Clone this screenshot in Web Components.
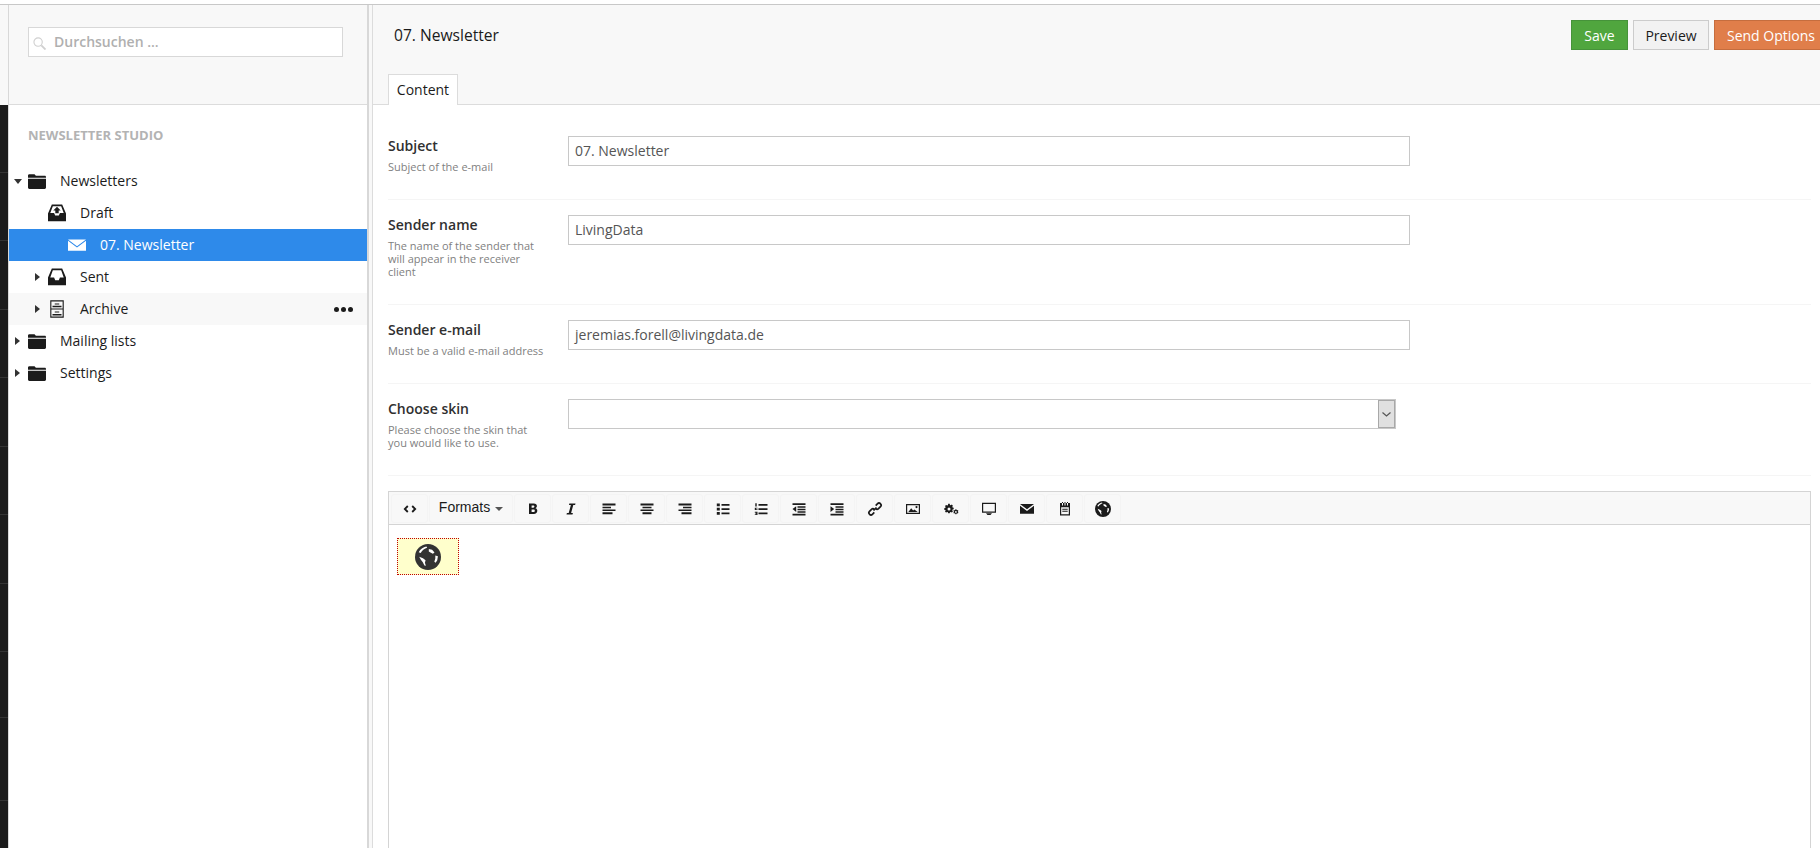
<!doctype html>
<html>
<head>
<meta charset="utf-8">
<style>
  html, body { margin: 0; height: 100%; overflow: hidden; background: #fff; }
  body { font-family: "Open Sans", sans-serif; font-size: 14px; color: #1b1b1b; }
</style>
</head>
<body>
<app-shell>
  <side-rail slot="rail"></side-rail>
  <tree-panel slot="tree"></tree-panel>
  <editor-view slot="main"></editor-view>
</app-shell>

<script>
  // shared icon paths, 16x16 box
  const ICONS = {
    folder: '<path d="M0 3.200C0 2.500.5 2 1.200 2h4.600l1.200 1.400h7.800c.7 0 1.200.5 1.200 1.100v.5H0zM0 6h16v7.800c0 .7-.5 1.200-1.200 1.200H1.200C.5 15 0 14.500 0 13.800z"/>',
    draft: '<path fill-rule="evenodd" d="M3.400.5h9.200L16 8.500v6.800H0V8.500zM4.300 2L2 8h3.400l1 2.300h3.200l1-2.300H14l-2.300-6zM8 2.500l3.300 3.300H9.500v2.500h-3V5.800H4.700z"/>',
    sent: '<path fill-rule="evenodd" d="M3.400.5h9.200L16 8.500v6.800H0V8.500zM4.300 2L2 8.500h3.400l1 2.300h3.200l1-2.300H14L11.700 2z"/>',
    archive: '<path fill-rule="evenodd" d="M2 .3h12v15.400H2zM3 1.300v6.200h10V1.300zM3 8.500v6.200h10V8.500zM4 5.200h8v1.300H4zM6 3h4v1H6zM4 12.400h8v1.300H4zM6 10.200h4v1H6z"/>',
    mail: '<path d="M0 3h16L8 9zM0 4.200V13h16V4.200L8 10.200z"/>',
    code: '<path fill="none" stroke="currentColor" stroke-width="1.800" d="M5.800 5L2.800 8l3 3M10.200 5l3 3-3 3"/>',
    bold: '<path fill-rule="evenodd" d="M4 2.500h4.800c2 0 3.100.9 3.100 2.600 0 1.100-.5 1.800-1.500 2.200 1.200.3 1.900 1.200 1.900 2.500 0 1.800-1.300 3.200-3.500 3.200H4zM6.600 4.500v2.200h1.700c.7 0 1.100-.4 1.100-1.100s-.4-1.100-1.100-1.100zM6.600 8.500v2.600h2c.8 0 1.200-.5 1.200-1.300s-.4-1.300-1.200-1.300z"/>',
    italic: '<path d="M6.300 2.500h6.200l-.4 1.600h-1.800l-2.200 7.800h1.800l-.4 1.600H3.500l.4-1.600h1.800l2.200-7.800H6z"/>',
    alignLeft: '<path d="M1.500 2.500h13v2h-13zM1.500 5.800h8.500v1.500H1.500zM1.500 8.500h13V10h-13zM1.500 11.300h10v2h-10z"/>',
    alignCenter: '<path d="M1.500 2.500h13v2h-13zM3.500 5.800h9v1.500h-9zM1.500 8.500h13V10h-13zM3.500 11.300h9v2h-9z"/>',
    alignRight: '<path d="M1.500 2.500h13v2h-13zM6 5.800h8.500v1.500H6zM1.500 8.500h13V10h-13zM4.500 11.300h10v2h-10z"/>',
    bullets: '<path d="M1.800 2.500h3v2.700h-3zM6.500 3h8v1.700h-8zM1.800 6.700h3v2.700h-3zM6.500 7.200h8v1.700h-8zM1.800 11h3v2.700h-3zM6.500 11.500h8v1.700h-8z"/>',
    numbers: '<path d="M2.300 2.300h1.400v3.200H2.300zM5.500 3h9v1.700h-9zM1.800 6.700h2.700v.9H3v.6h1.500v.9H1.800zM5.500 7.200h9v1.700h-9zM1.800 10.800h2.700v3.200H1.800v-.8h1.500v-.4H2.400v-.7h.9v-.4H1.800zM5.500 11.500h9v1.700h-9z"/>',
    outdent: '<path d="M1.500 2.300h13v1.600h-13zM6.500 5.300h8v1.400h-8zM6.500 7.800h8v1.400h-8zM6.500 10.300h8v1.400h-8zM1.500 12.800h13v1.600h-13zM5.200 5.200v5.800L1.500 8.100z"/>',
    indent: '<path d="M1.500 2.300h13v1.600h-13zM6.500 5.300h8v1.400h-8zM6.500 7.800h8v1.400h-8zM6.500 10.300h8v1.400h-8zM1.500 12.800h13v1.600h-13zM1.500 5.200v5.800l3.700-2.900z"/>',
    link: '<path fill="none" stroke="currentColor" stroke-width="1.700" d="M6.500 9.500l3-3M7.300 11.400l-1.900 1.900a2 2 0 0 1-2.800 0l-.1-.1a2 2 0 0 1 0-2.800l2-2a2 2 0 0 1 2.800 0M8.700 4.600l1.900-1.900a2 2 0 0 1 2.800 0l.1.100a2 2 0 0 1 0 2.800l-2 2a2 2 0 0 1-2.800 0"/>',
    image: '<path fill-rule="evenodd" d="M1 3h14v10H1zM2.200 4.200v7.600h11.600V4.200zM3.300 11l2.900-3.700 1.900 2.100 1.300-1 3.300 2.600zM11.500 5a1.100 1.100 0 1 1 0 2.200 1.100 1.100 0 0 1 0-2.200z"/>',
    gears: '<path fill-rule="evenodd" d="M5.200 2.800h1.500l.3 1.100.8.300 1-.6 1.100 1.100-.6 1 .3.800 1.100.3v1.500l-1.100.3-.3.800.6 1-1.100 1.100-1-.6-.8.300-.3 1.100H5.200l-.3-1.100-.8-.3-1 .6L2 10.800l.6-1-.3-.8-1.100-.3V7.200l1.100-.3.3-.8-.6-1L3.100 4l1 .6.8-.3zM6 6.500a1.500 1.500 0 1 0 0 3 1.500 1.500 0 0 0 0-3zM12.400 8.300h1l.2.700.6.300.7-.3.5.9-.5.500v.7l.5.500-.5.900-.7-.3-.6.300-.2.700h-1l-.2-.7-.6-.3-.7.300-.5-.9.500-.5v-.7l-.5-.500.5-.9.7.3.6-.3zM12.900 10a.9.900 0 1 0 0 1.800.9.900 0 0 0 0-1.800z"/>',
    screen: '<path fill-rule="evenodd" d="M1 1.800h14v10H1zM2.200 3v7.600h11.600V3zM5 12.300h6L9.500 14h-3z"/>',
    envelope: '<path d="M1 3h14L8 8.200zM1 4.700V12.800h14V4.700L8 10z"/>',
    note: '<path fill-rule="evenodd" d="M3 2h10v12.500H3zM4.200 6.200v7.100h7.600V6.200zM5 1h1v3.500H5zM7.500 1h1v3.500h-1zM10 1h1v3.500h-1zM5.300 7.700h5.400v1H5.300zM5.300 9.700h5.400v1H5.300z"/>',
    globe: '<circle cx="8" cy="8" r="8"/><path fill="#fff" d="M2.300 5C3.300 3 5 2 7 1.500l.5.8C6 2.800 4.500 3.800 3.500 5.500zM8.500 3l2 .5 1.500 1.800-1 .7-1.500-.8-1-.6zM2.600 7.800l2.300.9 1.600 1.300-.4 1.600.6 1.800-.9-.2-1-2-1.200-1.500zM12.500 7l1.600.5-.4 2.500-1 1.500-.8-.6.6-2z"/>'
  };
  const svg = (name, size = 16) =>
    `<svg part="icon" width="${size}" height="${size}" viewBox="0 0 16 16" fill="currentColor" aria-hidden="true">${ICONS[name]}</svg>`;

  class AppShell extends HTMLElement {
    constructor() {
      super();
      this.attachShadow({ mode: "open" }).innerHTML = `
      <style>
        :host { display: flex; flex-direction: column; height: 100vh; overflow: hidden; }
        .top { height: 4px; flex: none; background: #fff; border-bottom: 1px solid #c8c8c8; }
        .body { flex: 1; display: flex; min-height: 0; }
        .gutter { flex: none; width: 3px; background: #f8f8f8; border-left: 2px solid #d8d8d8; border-right: 1px solid #dcdcdc; }
      </style>
      <div class="top"></div>
      <div class="body">
        <slot name="rail"></slot>
        <slot name="tree"></slot>
        <div class="gutter"></div>
        <slot name="main"></slot>
      </div>`;
    }
  }

  class SideRail extends HTMLElement {
    constructor() {
      super();
      const cells = [68, 68, 69, 68, 69, 68, 69, 68, 66, 83]
        .map(h => `<div class="cell" style="height:${h}px"></div>`).join("");
      this.attachShadow({ mode: "open" }).innerHTML = `
      <style>
        :host { display: flex; flex-direction: column; flex: none; width: 9px; box-sizing: border-box; border-right: 1px solid #d8d8d8; }
        .head { height: 100px; background: #f8f8f8; flex: none; }
        .dark { flex: 1; background: #1b1b1b; }
        .cell { flex: none; background: #1b1b1b; border-bottom: 1px solid #333; box-sizing: border-box; }
      </style>
      <div class="head"></div>
      ${cells}
      <div class="dark"></div>`;
    }
  }

  class TreeRow extends HTMLElement {
    constructor() {
      super();
      const depth = +this.getAttribute("depth") || 0;
      const arrow = this.getAttribute("arrow") || "";
      const icon = this.getAttribute("icon");
      const more = this.hasAttribute("more") ? '<span class="more"><i></i><i></i><i></i></span>' : "";
      this.attachShadow({ mode: "open" }).innerHTML = `
      <style>
        :host { display: flex; align-items: center; height: 32px; padding-left: ${1 + depth * 20}px; padding-right: 14px; color: #1b1b1b; }
        :host([selected]) { background: #2e8aea; color: #fff; }
        :host([hover]) { background: #f8f8f8; }
        .arrow { width: 18px; flex: none; display: flex; align-items: center; justify-content: center; padding-right: 3px; box-sizing: border-box; }
        .arrow b { display: block; width: 0; height: 0; }
        .arrow.down b { border-left: 4px solid transparent; border-right: 4px solid transparent; border-top: 5px solid #333; }
        .arrow.right b { border-top: 4px solid transparent; border-bottom: 4px solid transparent; border-left: 5px solid #333; }
        .icon { width: 18px; height: 18px; flex: none; display: flex; align-items: center; justify-content: center; }
        svg { display: block; width: 18px; height: 18px; }
        .label { margin-left: 14px; flex: 1; line-height: 20px; white-space: nowrap; }
        .more { display: flex; gap: 2px; }
        .more i { width: 5px; height: 5px; border-radius: 50%; background: #1b1b1b; }
      </style>
      <span class="arrow ${arrow}"><b></b></span>
      <span class="icon">${svg(icon, 18)}</span>
      <span class="label"><slot></slot></span>
      ${more}`;
    }
  }

  class TreePanel extends HTMLElement {
    constructor() {
      super();
      this.attachShadow({ mode: "open" }).innerHTML = `
      <style>
        :host { display: flex; flex-direction: column; flex: none; width: 358px; background: #fff; }
        .head { height: 100px; flex: none; box-sizing: border-box; background: #f8f8f8; border-bottom: 1px solid #dcdcdc; padding: 22px 24px 0 19px; }
        .search { display: flex; align-items: center; height: 30px; box-sizing: border-box; background: #fff; border: 1px solid #d8d8d8; padding: 0 0 2px 4px; color: #b0b0b0; font-weight: 600; }
        .search svg { width: 13px; height: 13px; margin-right: 8px; margin-top: 5px; color: #d0d0d0; }
        h5 { margin: 0; padding: 22px 0 0 19px; height: 31px; font-size: 13px; line-height: 16px; font-weight: 700; color: #b3b3b3; text-transform: uppercase; }
        .list { padding-top: 7px; }
      </style>
      <div class="head">
        <div class="search">
          <svg viewBox="0 0 14 14" fill="none" stroke="currentColor" stroke-width="1.200"><circle cx="5.500" cy="5.500" r="4.500"/><path d="M9 9l4.500 4.500" stroke-width="2"/></svg>
          <span>Durchsuchen ...</span>
        </div>
      </div>
      <h5>Newsletter Studio</h5>
      <div class="list">
        <tree-row icon="folder" arrow="down">Newsletters</tree-row>
        <tree-row icon="draft" depth="1">Draft</tree-row>
        <tree-row icon="mail" depth="2" selected>07. Newsletter</tree-row>
        <tree-row icon="sent" depth="1" arrow="right">Sent</tree-row>
        <tree-row icon="archive" depth="1" arrow="right" hover more>Archive</tree-row>
        <tree-row icon="folder" arrow="right">Mailing lists</tree-row>
        <tree-row icon="folder" arrow="right">Settings</tree-row>
      </div>`;
    }
  }

  class FormRow extends HTMLElement {
    constructor() {
      super();
      const h = this.getAttribute("height");
      this.attachShadow({ mode: "open" }).innerHTML = `
      <style>
        :host { display: grid; grid-template-columns: 180px 1fr; box-sizing: border-box; height: ${h}px; padding-top: 15px; border-bottom: 1px solid #f5f5f5; }
        .label { font-weight: 600; line-height: 20px; color: #303030; }
        .desc { margin-top: 4px; width: 157px; font-size: 11px; line-height: 13px; color: #7f7f7f; }
        ::slotted(*) { grid-column: 2; }
      </style>
      <div>
        <div class="label">${this.getAttribute("label")}</div>
        <div class="desc">${this.getAttribute("desc")}</div>
      </div>
      <slot></slot>`;
    }
  }

  class TextBox extends HTMLElement {
    constructor() {
      super();
      this.attachShadow({ mode: "open" }).innerHTML = `
      <style>
        :host { display: flex; align-items: center; box-sizing: border-box; width: 842px; height: 30px; padding: 0 0 2px 6px; background: #fff; border: 1px solid #c8c8c8; color: #555; white-space: nowrap; }
      </style>
      <slot></slot>`;
    }
  }

  class SelectBox extends HTMLElement {
    constructor() {
      super();
      this.attachShadow({ mode: "open" }).innerHTML = `
      <style>
        :host { display: flex; justify-content: flex-end; box-sizing: border-box; width: 828px; height: 30px; background: #fff; border: 1px solid #c8c8c8; }
        .btn { width: 17px; box-sizing: border-box; background: #e0e0e0; border: 1px solid #a8a8a8; display: flex; align-items: center; justify-content: center; }
        svg { width: 9px; height: 5px; }
      </style>
      <span class="btn"><svg viewBox="0 0 9 5" fill="none" stroke="#555" stroke-width="1.200"><path d="M.5.500l4 3.500 4-3.500"/></svg></span>`;
    }
  }

  class ToolButton extends HTMLElement {
    constructor() {
      super();
      const icon = this.getAttribute("icon");
      const w = this.getAttribute("width") || 37;
      this.attachShadow({ mode: "open" }).innerHTML = `
      <style>
        :host { display: flex; align-items: center; justify-content: center; box-sizing: border-box; width: ${w}px; height: 29px; margin-top: 2px; border-radius: 3px; background: #f8f8f8; border: 1px solid #f4f4f4; color: #1b1b1b; font-family: "Liberation Sans", sans-serif; font-size: 14px; }
        svg { width: 16px; height: 16px; display: block; }
        .txt { display: block; margin-bottom: 3px; }
        b.caret { margin-left: 5px; width: 0; height: 0; border-left: 4px solid transparent; border-right: 4px solid transparent; border-top: 4px solid #555; }
      </style>
      ${icon ? svg(icon, 16) : '<span class="txt"><slot></slot></span>'}${this.hasAttribute("caret") ? '<b class="caret"></b>' : ""}`;
    }
  }

  class RichEditor extends HTMLElement {
    constructor() {
      super();
      this.attachShadow({ mode: "open" }).innerHTML = `
      <style>
        :host { display: flex; flex-direction: column; flex: 1; box-sizing: border-box; margin-top: 15px; width: 1423px; border: 1px solid #d4d4d4; border-bottom: 0; }
        .bar { flex: none; display: flex; gap: 1px; height: 33px; box-sizing: border-box; padding-left: 2px; background: #f8f8f8; border-bottom: 1px solid #d4d4d4; }
        .area { flex: 1; padding: 13px 8px; background: #fff; }
        .macro { display: flex; align-items: center; justify-content: center; width: 62px; height: 37px; box-sizing: border-box; background: #ffffcc; border: 1px dotted #c00000; color: #333; }
        .macro svg { width: 26px; height: 26px; display: block; }
      </style>
      <div class="bar"><slot name="tools"></slot></div>
      <div class="area">
        <div class="macro">${svg("globe", 26)}</div>
      </div>`;
    }
  }

  class EditorView extends HTMLElement {
    constructor() {
      super();
      this.attachShadow({ mode: "open" }).innerHTML = `
      <style>
        :host { display: flex; flex-direction: column; flex: 1; min-width: 0; background: #fff; }
        .head { flex: none; height: 100px; box-sizing: border-box; background: #f8f8f8; border-bottom: 1px solid #dcdcdc; padding: 15px 0 0 15px; display: flex; flex-direction: column; justify-content: space-between; }
        .titlebar { display: flex; align-items: center; }
        h1 { flex: 1; margin: 0 0 0 6px; font-size: 15.6px; font-weight: 400; line-height: 22px; color: #1b1b1b; }
        .btns { display: flex; gap: 5px; }
        .btn { box-sizing: border-box; height: 30px; display: flex; align-items: center; justify-content: center; border: 1px solid; }
        .save { width: 57px; background: #50a63e; border-color: #46933a; color: #fff; }
        .preview { width: 76px; background: #f2f2f2; border-color: #cccccc; color: #1b1b1b; }
        .send { width: 106px; padding-left: 12px; justify-content: flex-start; background: #e07e4a; border-color: #c56d3e; border-right: 0; color: #fff; white-space: nowrap; }
        .tab { align-self: flex-start; box-sizing: border-box; width: 70px; height: 31px; margin-bottom: -1px; background: #fff; border: 1px solid #dcdcdc; border-bottom: 0; display: flex; align-items: center; justify-content: center; line-height: 20px; }
        .content { flex: 1; display: flex; flex-direction: column; min-height: 0; padding: 16px 9px 0 15px; }
      </style>
      <div class="head">
        <div class="titlebar">
          <h1>07. Newsletter</h1>
          <div class="btns">
            <div class="btn save">Save</div>
            <div class="btn preview">Preview</div>
            <div class="btn send">Send Options</div>
          </div>
        </div>
        <div class="tab">Content</div>
      </div>
      <div class="content">
        <form-row label="Subject" desc="Subject of the e-mail" height="79"><text-box>07. Newsletter</text-box></form-row>
        <form-row label="Sender name" desc="The name of the sender that will appear in the receiver client" height="105"><text-box>LivingData</text-box></form-row>
        <form-row label="Sender e-mail" desc="Must be a valid e-mail address" height="79"><text-box>jeremias.forell@livingdata.de</text-box></form-row>
        <form-row label="Choose skin" desc="Please choose the skin that you would like to use." height="92"><select-box></select-box></form-row>
        <rich-editor>
          <tool-button slot="tools" icon="code"></tool-button>
          <tool-button slot="tools" width="84" caret>Formats</tool-button>
          <tool-button slot="tools" icon="bold"></tool-button>
          <tool-button slot="tools" icon="italic"></tool-button>
          <tool-button slot="tools" icon="alignLeft"></tool-button>
          <tool-button slot="tools" icon="alignCenter"></tool-button>
          <tool-button slot="tools" icon="alignRight"></tool-button>
          <tool-button slot="tools" icon="bullets"></tool-button>
          <tool-button slot="tools" icon="numbers"></tool-button>
          <tool-button slot="tools" icon="outdent"></tool-button>
          <tool-button slot="tools" icon="indent"></tool-button>
          <tool-button slot="tools" icon="link"></tool-button>
          <tool-button slot="tools" icon="image"></tool-button>
          <tool-button slot="tools" icon="gears"></tool-button>
          <tool-button slot="tools" icon="screen"></tool-button>
          <tool-button slot="tools" icon="envelope"></tool-button>
          <tool-button slot="tools" icon="note"></tool-button>
          <tool-button slot="tools" icon="globe"></tool-button>
        </rich-editor>
      </div>`;
    }
  }

  customElements.define("tree-row", TreeRow);
  customElements.define("side-rail", SideRail);
  customElements.define("tree-panel", TreePanel);
  customElements.define("form-row", FormRow);
  customElements.define("text-box", TextBox);
  customElements.define("select-box", SelectBox);
  customElements.define("tool-button", ToolButton);
  customElements.define("rich-editor", RichEditor);
  customElements.define("editor-view", EditorView);
  customElements.define("app-shell", AppShell);
</script>
</body>
</html>
